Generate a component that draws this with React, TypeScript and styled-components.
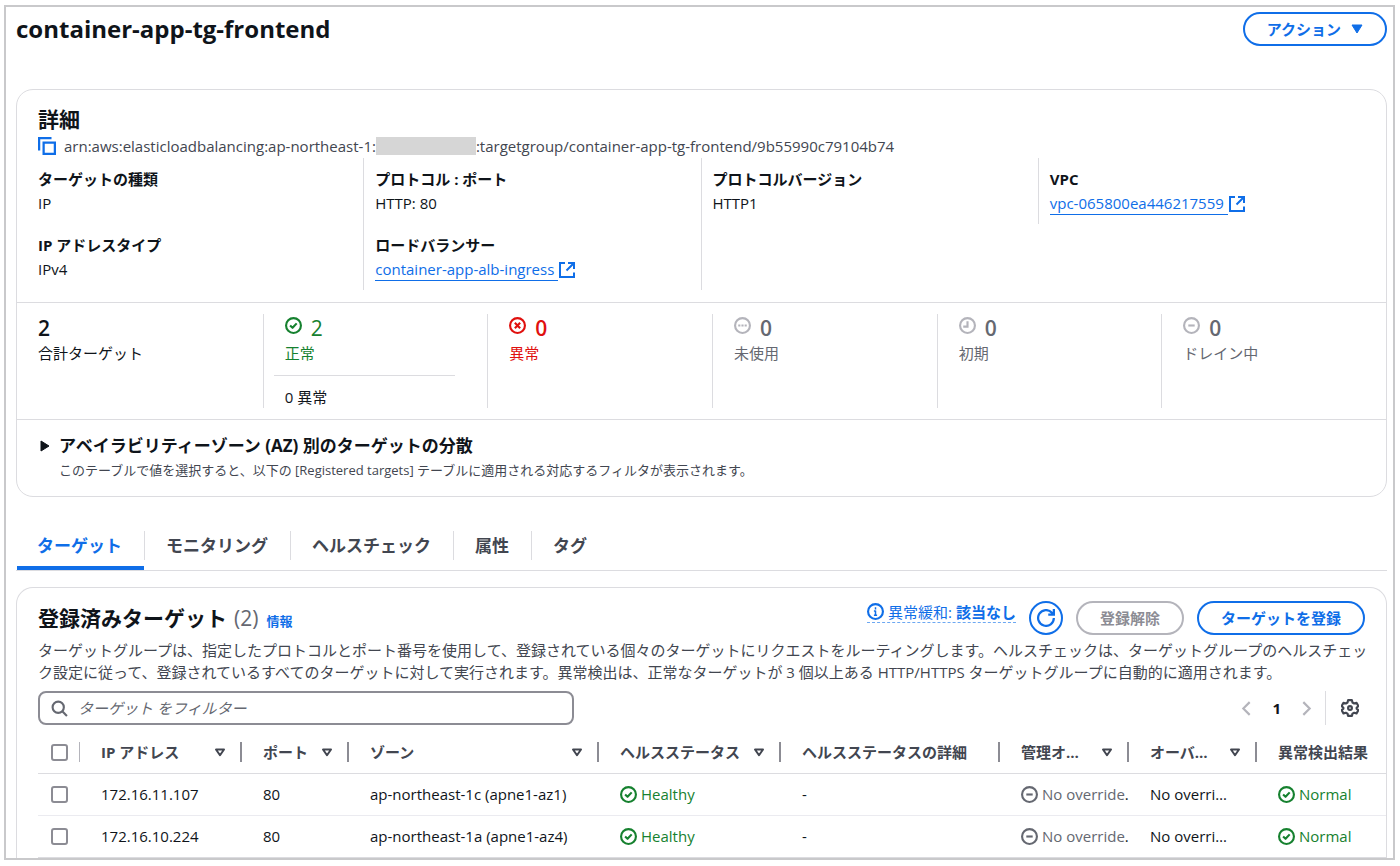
import React from 'react';
import styled, { createGlobalStyle } from 'styled-components';

const color = {
  text: '#0f141a',
  body: '#424650',
  muted: '#656871',
  disabled: '#8c8c94',
  pale: '#b4b4bb',
  line: '#dcdce0',
  rowLine: '#ebebf0',
  blue: '#0f6ee8',
  green: '#16812f',
  red: '#e0100e',
};

const GlobalStyle = createGlobalStyle`
  *, *::before, *::after { box-sizing: border-box; }
  body {
    margin: 0;
    background: #fff;
    color: ${color.text};
    font-family: "Open Sans", "Noto Sans CJK JP", sans-serif;
    font-size: 15px;
    line-height: 22px;
  }
  h1, h2, h3, p, dl, dt, dd { margin: 0; }
  button, input { font: inherit; color: inherit; }
  button { cursor: pointer; }
  svg { display: block; flex: none; }
`;

/* ---------- icons ---------- */

type GlyphProps = { size?: number; children: React.ReactNode; width?: number };

const Glyph = ({ size = 17, width = 2, children }: GlyphProps) => (
  <svg
    width={size}
    height={size}
    viewBox="0 0 16 16"
    fill="none"
    stroke="currentColor"
    strokeWidth={width}
    strokeLinejoin="round"
    aria-hidden="true"
  >
    {children}
  </svg>
);

const CheckCircle = () => (
  <Glyph>
    <circle cx="8" cy="8" r="7" />
    <path d="M4.8 8l2.3 2.2 3.9-4.2" />
  </Glyph>
);
const ErrorCircle = () => (
  <Glyph>
    <circle cx="8" cy="8" r="7" />
    <path d="M5.5 5.500l5 5M10.500 5.500l-5 5" />
  </Glyph>
);
const PendingCircle = () => (
  <Glyph>
    <circle cx="8" cy="8" r="7" />
    <path d="M4 8h2M7 8h2M10 8h2" />
  </Glyph>
);
const ClockCircle = () => (
  <Glyph>
    <circle cx="8" cy="8" r="7" />
    <path d="M8 4v5H4" strokeLinejoin="miter" />
  </Glyph>
);
const MinusCircle = () => (
  <Glyph>
    <circle cx="8" cy="8" r="7" />
    <path d="M5 8h6" />
  </Glyph>
);
const InfoCircle = () => (
  <Glyph>
    <circle cx="8" cy="8" r="7" />
    <path d="M8 4v2M8 7v5M6.5 11.5h3M6.5 7.5H8" strokeWidth="1.4" />
  </Glyph>
);
const CopyIcon = () => (
  <Glyph size={18}>
    <path d="M1 12V1h11" strokeLinejoin="miter" />
    <path d="M5 5h10v10H5z" strokeLinejoin="miter" />
  </Glyph>
);
const ExternalIcon = () => (
  <Glyph size={16}>
    <path d="M6 1H1v14h14V10.500M9 1h6v6M15 1L7.500 8.500" strokeLinejoin="miter" />
  </Glyph>
);
const RefreshIcon = () => (
  <Glyph size={18}>
    <path d="M15 8a7 7 0 1 1-1.700-4.600L15 5M15 0v5h-5" strokeLinejoin="miter" />
  </Glyph>
);
const SearchIcon = () => (
  <Glyph size={17}>
    <circle cx="6.800" cy="6.800" r="5.300" />
    <path d="M10.600 10.600L15 15" />
  </Glyph>
);
const GearIcon = () => (
  <Glyph size={18} width={1.9}>
    <path d="M6.300 1h3.400l.5 2.100 1.500.9 2.100-.6 1.600 2.900L13.900 7.700v.9l1.500 1.300-1.600 2.900-2.100-.6-1.500.8L9.700 15H6.300l-.5-2-1.500-.8-2.100.6L.6 9.900 2.100 8.600v-.9L.6 6.300l1.600-2.900 2.100.6 1.500-.9z" />
    <circle cx="8" cy="8" r="1.700" />
  </Glyph>
);
const ChevronLeft = () => (
  <Glyph size={17}>
    <path d="M11 2L5 8l6 6" strokeLinejoin="miter" />
  </Glyph>
);
const ChevronRight = () => (
  <Glyph size={17}>
    <path d="M5 2l6 6-6 6" strokeLinejoin="miter" />
  </Glyph>
);
const CaretDown = () => (
  <svg width="12" height="10" viewBox="0 0 12 10" aria-hidden="true">
    <path d="M1 1h10L6 9z" fill="currentColor" stroke="currentColor" strokeLinejoin="round" />
  </svg>
);
const CaretRight = () => (
  <svg width="12" height="12" viewBox="0 0 12 12" aria-hidden="true">
    <path d="M2 1v10l8-5z" fill="currentColor" stroke="currentColor" strokeLinejoin="round" />
  </svg>
);
const SortIcon = () => (
  <svg width="12" height="10" viewBox="0 0 12 10" fill="none" aria-hidden="true">
    <path d="M2 2.500h8L6 8.200z" stroke="currentColor" strokeWidth="2" strokeLinejoin="round" />
  </svg>
);

/* ---------- page ---------- */

const Frame = styled.div`
  margin: 5px 5px 5px 4px;
  padding: 5px 6px 0 10px;
  border: 2px solid #c9c9cb;
`;

const TitleBar = styled.header`
  display: flex;
  align-items: center;
  justify-content: space-between;
  margin-bottom: 43px;
`;

const Title = styled.h1`
  font-size: 24px;
  line-height: 34px;
  font-weight: 700;
`;

const PillButton = styled.button`
  display: inline-flex;
  align-items: center;
  justify-content: center;
  gap: 10px;
  height: 34px;
  padding: 0 22px;
  border: 2px solid currentColor;
  border-radius: 17px;
  background: #fff;
  color: ${color.blue};
  font-weight: 700;
  white-space: nowrap;
  &:disabled {
    color: ${color.disabled};
    border-color: ${color.pale};
    cursor: default;
  }
`;

const RoundButton = styled(PillButton)`
  width: 34px;
  padding: 0;
`;

const BareButton = styled.button`
  display: inline-flex;
  align-items: center;
  padding: 0;
  border: 0;
  background: none;
  &:disabled { cursor: default; color: ${color.pale}; }
`;

const Panel = styled.section<{ $open?: boolean }>`
  border: 1px solid ${color.line};
  border-radius: ${p => (p.$open ? '17px 17px 0 0' : '17px')};
  ${p => p.$open && 'border-bottom: 0;'}
`;

/* ---------- details ---------- */

const DetailsHeader = styled.div`
  padding: 15px 21px 0;
`;

const Heading = styled.h2`
  font-size: 21px;
  line-height: 28px;
  font-weight: 700;
`;

const ArnLine = styled.div`
  display: flex;
  align-items: center;
  height: 25px;
  color: ${color.body};
`;

const CopyButton = styled(BareButton)`
  margin-right: 8px;
  color: ${color.blue};
`;

const Redacted = styled.span`
  width: 100px;
  height: 18px;
  background: #d6d6d6;
`;

const FieldColumns = styled.div`
  display: grid;
  grid-template-columns: repeat(4, 1fr);
  padding: 0 11px 12px 9px;
`;

const FieldColumn = styled.dl<{ $divided: boolean; $short?: boolean }>`
  padding-left: ${p => (p.$divided ? '11px' : '12px')};
  border-left: ${p => (p.$divided ? `1px solid ${color.line}` : '0')};
  align-self: ${p => (p.$short ? 'start' : 'stretch')};
`;

const Field = styled.div`
  padding: 9px 0;
  line-height: 24px;
`;

const FieldLabel = styled.dt`
  font-weight: 700;
`;

const FieldValue = styled.dd`
  height: 24px;
`;

const ExternalLink = styled.a`
  display: inline-flex;
  align-items: center;
  color: ${color.blue};
  text-decoration: none;
`;

const LinkText = styled.span`
  padding-right: 4px;
  margin-right: 1px;
  line-height: 22px;
  border-bottom: 1px solid currentColor;
`;

const Stats = styled.div`
  display: grid;
  grid-template-columns: repeat(6, 1fr);
  padding: 11px 0 11px 21px;
  border-top: 1px solid ${color.line};
  border-bottom: 1px solid ${color.line};
`;

type Tone = 'text' | 'green' | 'red' | 'muted';

const Stat = styled.div<{ $tone: Tone; $divided: boolean }>`
  min-height: 94px;
  padding: 0 32px 0 ${p => (p.$divided ? '21px' : '0')};
  border-left: ${p => (p.$divided ? `1px solid ${color.line}` : '0')};
  color: ${p => color[p.$tone]};
`;

const StatTop = styled.div`
  display: flex;
  gap: 9px;
  height: 27px;
`;

const StatIcon = styled.span<{ $pale: boolean }>`
  padding-top: 3px;
  color: ${p => (p.$pale ? color.pale : 'inherit')};
`;

const StatNumber = styled.span<{ $strong: boolean }>`
  font-size: 21px;
  line-height: 29px;
  font-weight: ${p => (p.$strong ? 600 : 500)};
`;

const StatLabel = styled.div`
  line-height: 24px;
`;

const SubStat = styled.div`
  margin: 10px 0 0 -11px;
  padding: 10px 0 0 11px;
  border-top: 1px solid ${color.line};
  color: ${color.text};
`;

const Expander = styled.div`
  display: grid;
  grid-template-columns: 20px 1fr;
  align-items: center;
  padding: 13px 22px 15px;
`;

const ExpanderTitle = styled.h3`
  font-size: 17px;
  line-height: 26px;
  font-weight: 700;
`;

const ExpanderNote = styled.p`
  grid-column: 2;
  font-size: 13px;
  color: ${color.body};
`;

/* ---------- tabs ---------- */

const TabList = styled.nav`
  display: flex;
  margin: 28px 0 16px;
  border-bottom: 1px solid ${color.line};
`;

const Tab = styled.button<{ $active: boolean }>`
  display: flex;
  align-items: flex-start;
  height: 45px;
  padding: 6px 0 0;
  border: 0;
  background: linear-gradient(${p => (p.$active ? color.blue : 'transparent')}, ${p => (p.$active ? color.blue : 'transparent')})
    1px 100% / calc(100% - 2px) 4px no-repeat;
  color: ${p => (p.$active ? color.blue : color.body)};
  font-size: 17px;
  font-weight: 700;
`;

const TabLabel = styled.span`
  padding: 0 22px 0 21px;
  line-height: 29px;
  border-right: 1px solid ${color.line};
  ${Tab}:last-child & { border-right: 0; }
`;

/* ---------- targets ---------- */

const TargetsHeader = styled.div`
  display: flex;
  justify-content: space-between;
  align-items: center;
  padding: 13px 21px 0;
`;

const TargetsTitle = styled.div`
  display: flex;
  align-items: baseline;
`;

const Count = styled.span`
  margin-left: 7px;
  font-weight: 400;
  color: ${color.muted};
`;

const InfoLink = styled.a`
  margin-left: 8px;
  font-size: 13px;
  font-weight: 700;
  color: ${color.blue};
  text-decoration: none;
`;

const Actions = styled.div`
  display: flex;
  gap: 13px;
`;

const Mitigation = styled(BareButton)`
  gap: 4px;
  height: 22px;
  color: ${color.blue};
  border-bottom: 1px dashed #6ca8f2;
  white-space: nowrap;
`;

const Description = styled.p`
  padding: 4px 16px 0 21px;
  color: ${color.body};
`;

const Toolbar = styled.div`
  display: flex;
  align-items: center;
  justify-content: space-between;
  padding: 8px 21px 0;
`;

const SearchBox = styled.label`
  display: flex;
  align-items: center;
  gap: 10px;
  width: 536px;
  height: 34px;
  padding: 0 11px;
  border: 2px solid ${color.disabled};
  border-radius: 8px;
  color: ${color.muted};
`;

const SearchInput = styled.input`
  flex: 1;
  min-width: 0;
  padding: 0;
  border: 0;
  outline: 0;
  background: none;
  &::placeholder {
    color: ${color.muted};
    font-style: italic;
    opacity: 1;
  }
`;

const Pagination = styled.div`
  display: flex;
  align-items: center;
  gap: 16px;
  color: ${color.text};
`;

const PageNumber = styled.button`
  padding: 0 1px;
  border: 0;
  background: none;
  font-weight: 700;
`;

const Settings = styled.div`
  display: flex;
  align-items: center;
  height: 34px;
  margin-left: -6px;
  padding: 0 6px 0 15px;
  border-left: 1px solid ${color.line};
  color: ${color.body};
`;

const TableArea = styled.div`
  padding: 7px 0 0 21px;
  overflow: hidden;
`;

const Table = styled.table`
  width: 100%;
  table-layout: fixed;
  border-collapse: collapse;
`;

const Col = styled.col<{ $width?: number }>`
  width: ${p => (p.$width ? `${p.$width}px` : 'auto')};
`;

const HeadCell = styled.th`
  height: 41px;
  padding: 0;
  border-bottom: 1px solid ${color.line};
  color: ${color.body};
  font-weight: 700;
  text-align: left;
`;

const HeadInner = styled.div<{ $last?: boolean; $select?: boolean }>`
  display: flex;
  align-items: center;
  justify-content: space-between;
  height: 20px;
  padding: 0 ${p => (p.$last ? '0' : '14px')} 0 ${p => (p.$select ? '13px' : '21px')};
  border-right: ${p => (p.$last ? '0' : `${p.$select ? 1 : 2}px solid ${p.$select ? color.pale : color.disabled}`)};
  white-space: nowrap;
`;

const Cell = styled.td`
  height: 42px;
  padding: 0 0 0 21px;
  overflow: hidden;
  white-space: nowrap;
  tr:not(:last-child) > & { border-bottom: 1px solid ${color.rowLine}; }
  tr:last-child > & { border-bottom: 1px solid ${color.line}; }
`;

const SelectCell = styled(Cell)`
  padding-left: 13px;
`;

const Checkbox = styled.input.attrs({ type: 'checkbox' })`
  display: block;
  flex: none;
  appearance: none;
  width: 17px;
  height: 17px;
  margin: 0;
  border: 2px solid ${color.disabled};
  border-radius: 3px;
  background: #fff;
`;

const Status = styled.span<{ $tone: Tone }>`
  display: flex;
  align-items: center;
  gap: 4px;
  color: ${p => color[p.$tone]};
`;

const Period = styled.span`
  color: ${color.text};
`;

/* ---------- data ---------- */

type FieldData = { label: string; value: string; href?: string };

const fieldColumns: FieldData[][] = [
  [
    { label: 'ターゲットの種類', value: 'IP' },
    { label: 'IP アドレスタイプ', value: 'IPv4' },
  ],
  [
    { label: 'プロトコル : ポート', value: 'HTTP: 80' },
    { label: 'ロードバランサー', value: 'container-app-alb-ingress', href: '#alb' },
  ],
  [{ label: 'プロトコルバージョン', value: 'HTTP1' }],
  [{ label: 'VPC', value: 'vpc-065800ea446217559', href: '#vpc' }],
];

const stats: { value: number; label: string; tone: Tone; icon?: React.ReactNode; sub?: string }[] = [
  { value: 2, label: '合計ターゲット', tone: 'text' },
  { value: 2, label: '正常', tone: 'green', icon: <CheckCircle />, sub: '0 異常' },
  { value: 0, label: '異常', tone: 'red', icon: <ErrorCircle /> },
  { value: 0, label: '未使用', tone: 'muted', icon: <PendingCircle /> },
  { value: 0, label: '初期', tone: 'muted', icon: <ClockCircle /> },
  { value: 0, label: 'ドレイン中', tone: 'muted', icon: <MinusCircle /> },
];

const tabs = ['ターゲット', 'モニタリング', 'ヘルスチェック', '属性', 'タグ'];

const columns: { label: string; width?: number; sortable?: boolean }[] = [
  { label: 'IP アドレス', width: 162, sortable: true },
  { label: 'ポート', width: 107, sortable: true },
  { label: 'ゾーン', sortable: true },
  { label: 'ヘルスステータス', width: 182, sortable: true },
  { label: 'ヘルスステータスの詳細', width: 219 },
  { label: '管理オ…', width: 129, sortable: true },
  { label: 'オーバ…', width: 128, sortable: true },
  { label: '異常検出結果', width: 129 },
];

const targets = [
  { ip: '172.16.11.107', port: 80, zone: 'ap-northeast-1c (apne1-az1)' },
  { ip: '172.16.10.224', port: 80, zone: 'ap-northeast-1a (apne1-az4)' },
];

export default function App() {
  return (
    <>
      <GlobalStyle />
      <Frame>
        <TitleBar>
          <Title>container-app-tg-frontend</Title>
          <PillButton type="button">
            アクション
            <CaretDown />
          </PillButton>
        </TitleBar>

        <Panel>
          <DetailsHeader>
            <Heading>詳細</Heading>
            <ArnLine>
              <CopyButton type="button" aria-label="ARN をコピー">
                <CopyIcon />
              </CopyButton>
              <span>arn:aws:elasticloadbalancing:ap-northeast-1:</span>
              <Redacted />
              <span>:targetgroup/container-app-tg-frontend/9b55990c79104b74</span>
            </ArnLine>
          </DetailsHeader>

          <FieldColumns>
            {fieldColumns.map((fields, i) => (
              <FieldColumn key={i} $divided={i > 0} $short={i === 3}>
                {fields.map(f => (
                  <Field key={f.label}>
                    <FieldLabel>{f.label}</FieldLabel>
                    <FieldValue>
                      {f.href ? (
                        <ExternalLink href={f.href}>
                          <LinkText>{f.value}</LinkText>
                          <ExternalIcon />
                        </ExternalLink>
                      ) : (
                        f.value
                      )}
                    </FieldValue>
                  </Field>
                ))}
              </FieldColumn>
            ))}
          </FieldColumns>

          <Stats>
            {stats.map((s, i) => (
              <Stat key={s.label} $tone={s.tone} $divided={i > 0}>
                <StatTop>
                  {s.icon && <StatIcon $pale={s.tone === 'muted'}>{s.icon}</StatIcon>}
                  <StatNumber $strong={s.tone !== 'green'}>{s.value}</StatNumber>
                </StatTop>
                <StatLabel>{s.label}</StatLabel>
                {s.sub && <SubStat>{s.sub}</SubStat>}
              </Stat>
            ))}
          </Stats>

          <Expander>
            <BareButton type="button" aria-label="展開">
              <CaretRight />
            </BareButton>
            <ExpanderTitle>アベイラビリティーゾーン (AZ) 別のターゲットの分散</ExpanderTitle>
            <ExpanderNote>
              このテーブルで値を選択すると、以下の [Registered targets] テーブルに適用される対応するフィルタが表示されます。
            </ExpanderNote>
          </Expander>
        </Panel>

        <TabList>
          {tabs.map((t, i) => (
            <Tab key={t} type="button" $active={i === 0}>
              <TabLabel>{t}</TabLabel>
            </Tab>
          ))}
        </TabList>

        <Panel $open>
          <TargetsHeader>
            <TargetsTitle>
              <Heading>
                登録済みターゲット<Count>(2)</Count>
              </Heading>
              <InfoLink href="#info">情報</InfoLink>
            </TargetsTitle>
            <Actions>
              <Mitigation type="button">
                <InfoCircle />
                <span>
                  異常緩和: <b>該当なし</b>
                </span>
              </Mitigation>
              <RoundButton type="button" aria-label="更新">
                <RefreshIcon />
              </RoundButton>
              <PillButton type="button" disabled>
                登録解除
              </PillButton>
              <PillButton type="button">ターゲットを登録</PillButton>
            </Actions>
          </TargetsHeader>
          <Description>
            ターゲットグループは、指定したプロトコルとポート番号を使用して、登録されている個々のターゲットにリクエストをルーティングします。ヘルスチェックは、ターゲットグループのヘルスチェック設定に従って、登録されているすべてのターゲットに対して実行されます。異常検出は、正常なターゲットが 3 個以上ある HTTP/HTTPS ターゲットグループに自動的に適用されます。
          </Description>

          <Toolbar>
            <SearchBox>
              <SearchIcon />
              <SearchInput type="text" placeholder="ターゲット をフィルター" aria-label="ターゲットをフィルター" />
            </SearchBox>
            <Pagination>
              <BareButton type="button" disabled aria-label="前のページ">
                <ChevronLeft />
              </BareButton>
              <PageNumber type="button">1</PageNumber>
              <BareButton type="button" disabled aria-label="次のページ">
                <ChevronRight />
              </BareButton>
              <Settings>
                <BareButton type="button" aria-label="設定">
                  <GearIcon />
                </BareButton>
              </Settings>
            </Pagination>
          </Toolbar>

          <TableArea>
            <Table>
              <colgroup>
                <Col $width={42} />
                {columns.map(c => (
                  <Col key={c.label} $width={c.width} />
                ))}
              </colgroup>
              <thead>
                <tr>
                  <HeadCell scope="col">
                    <HeadInner $select>
                      <Checkbox aria-label="すべて選択" />
                    </HeadInner>
                  </HeadCell>
                  {columns.map((c, i) => (
                    <HeadCell key={c.label} scope="col">
                      <HeadInner $last={i === columns.length - 1}>
                        {c.label}
                        {c.sortable && (
                          <BareButton type="button" aria-label={`${c.label} で並べ替え`}>
                            <SortIcon />
                          </BareButton>
                        )}
                      </HeadInner>
                    </HeadCell>
                  ))}
                </tr>
              </thead>
              <tbody>
                {targets.map(t => (
                  <tr key={t.ip}>
                    <SelectCell>
                      <Checkbox aria-label={`${t.ip} を選択`} />
                    </SelectCell>
                    <Cell>{t.ip}</Cell>
                    <Cell>{t.port}</Cell>
                    <Cell>{t.zone}</Cell>
                    <Cell>
                      <Status $tone="green">
                        <CheckCircle />
                        Healthy
                      </Status>
                    </Cell>
                    <Cell>-</Cell>
                    <Cell>
                      <Status $tone="muted">
                        <MinusCircle />
                        <span>
                          No override<Period>.</Period>
                        </span>
                      </Status>
                    </Cell>
                    <Cell>No overri…</Cell>
                    <Cell>
                      <Status $tone="green">
                        <CheckCircle />
                        Normal
                      </Status>
                    </Cell>
                  </tr>
                ))}
              </tbody>
            </Table>
          </TableArea>
        </Panel>
      </Frame>
    </>
  );
}
